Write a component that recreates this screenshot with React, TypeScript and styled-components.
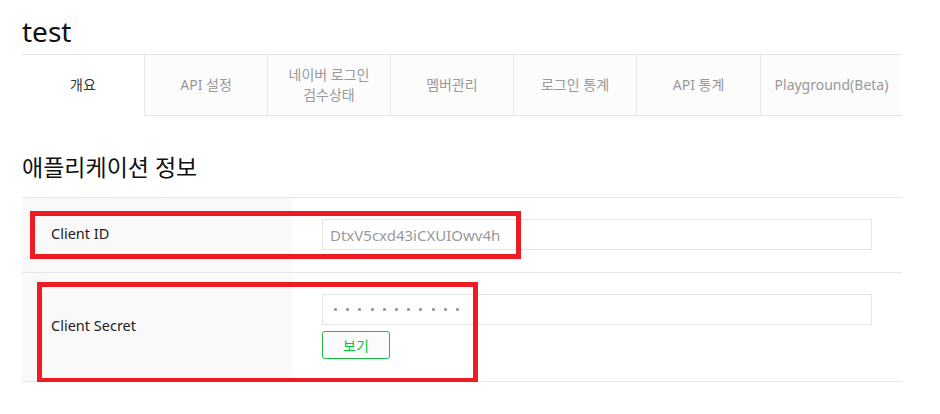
import React from "react";
import styled, { createGlobalStyle } from "styled-components";

const Global = createGlobalStyle`
  html, body { margin: 0; padding: 0; background: #fff; }
  body { font-family: "Noto Sans", "Noto Sans CJK KR", sans-serif; }
`;

const Page = styled.div`
  width: 880px;
  padding-left: 22px;
`;

const Title = styled.h1`
  margin: 0;
  padding: 12px 0 4px;
  font-size: 28px;
  line-height: 38px;
  font-weight: 400;
  color: #111;
`;

const TabBar = styled.div`
  display: flex;
  border-top: 1px solid #e5e5e5;
`;

const Tab = styled.div<{ $w: number; $active?: boolean; $first?: boolean }>`
  box-sizing: border-box;
  width: ${(p) => p.$w}px;
  height: 61px;
  display: flex;
  align-items: center;
  justify-content: center;
  text-align: center;
  font-size: 14px;
  line-height: 20px;
  background: ${(p) => (p.$active ? "#fff" : "#fcfcfc")};
  color: ${(p) => (p.$active ? "#333" : "#999")};
  border-left: ${(p) => (p.$first ? "none" : "1px solid #e5e5e5")};
  border-bottom: 1px solid ${(p) => (p.$active ? "#fff" : "#e5e5e5")};
`;

const Heading = styled.h2`
  margin: 36px 0 15px;
  font-size: 23px;
  line-height: 30px;
  font-weight: 400;
  color: #111;
`;

const Table = styled.div`
  border-top: 1px solid #e6e6e6;
`;

const Row = styled.div`
  position: relative;
  display: grid;
  grid-template-columns: 270px 1fr;
  border-bottom: 1px solid #e6e6e6;
`;

const Label = styled.div`
  background: #f9f9f9;
  display: flex;
  align-items: center;
  padding: 0 0 4px 29px;
  font-size: 14.5px;
  color: #222;
`;

const Value = styled.div`
  padding: 21px 30px 22px;
  display: flex;
  flex-direction: column;
  align-items: flex-start;
  gap: 6px;
`;

const Field = styled.div`
  box-sizing: border-box;
  width: 550px;
  height: 31px;
  border: 1px solid #e5e5e5;
  display: flex;
  align-items: center;
  padding-left: 7px;
  font-size: 15px;
  color: #999;
`;

const Dots = styled.div`
  display: flex;
  gap: 9.2px;
  padding-left: 4px;
`;

const Dot = styled.span`
  width: 3px;
  height: 3px;
  border-radius: 1px;
  background: #999;
`;

const Button = styled.button`
  box-sizing: border-box;
  width: 68px;
  height: 28px;
  border: 1px solid #19bd3f;
  border-radius: 3px;
  background: #fbfbfb;
  color: #00c73c;
  font-family: inherit;
  font-size: 14px;
  padding: 0;
`;

const Highlight = styled.div<{ $top: number; $left: number; $w: number; $h: number }>`
  position: absolute;
  box-sizing: border-box;
  top: ${(p) => p.$top}px;
  left: ${(p) => p.$left}px;
  width: ${(p) => p.$w}px;
  height: ${(p) => p.$h}px;
  border: 5px solid #ed1c24;
  pointer-events: none;
`;

const tabs = [
  { w: 122, label: "개요", active: true },
  { w: 123, label: "API 설정" },
  { w: 123, label: "네이버 로그인\n검수상태" },
  { w: 123, label: "멤버관리" },
  { w: 123, label: "로그인 통계" },
  { w: 124, label: "API 통계" },
  { w: 142, label: "Playground(Beta)" },
];

export default function App() {
  return (
    <Page>
      <Global />
      <Title>test</Title>
      <TabBar>
        {tabs.map((t, i) => (
          <Tab key={i} $w={t.w} $active={t.active} $first={i === 0}>
            <span>
              {t.label.split("\n").map((l, j) => (
                <React.Fragment key={j}>
                  {j > 0 && <br />}
                  {l}
                </React.Fragment>
              ))}
            </span>
          </Tab>
        ))}
      </TabBar>
      <Heading>애플리케이션 정보</Heading>
      <Table>
        <Row>
          <Label>Client ID</Label>
          <Value>
            <Field>DtxV5cxd43iCXUIOwv4h</Field>
          </Value>
          <Highlight $top={13} $left={8} $w={491} $h={48} />
        </Row>
        <Row>
          <Label>Client Secret</Label>
          <Value>
            <Field>
              <Dots>
                {Array.from({ length: 11 }).map((_, i) => (
                  <Dot key={i} />
                ))}
              </Dots>
            </Field>
            <Button>보기</Button>
          </Value>
          <Highlight $top={9} $left={15} $w={441} $h={101} />
        </Row>
      </Table>
    </Page>
  );
}
